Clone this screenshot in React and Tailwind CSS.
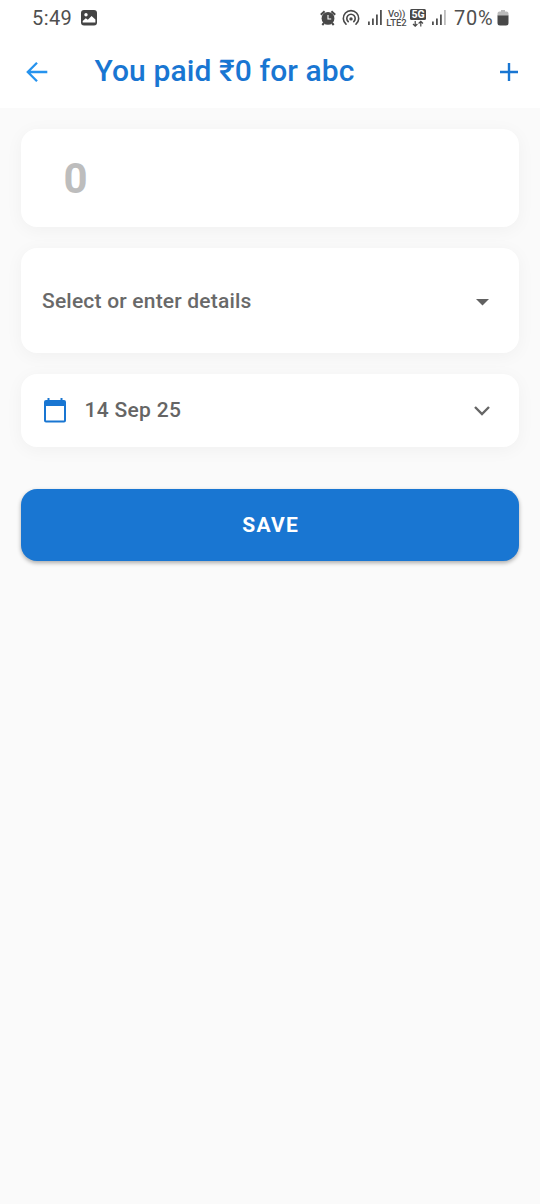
import React from "react";

function AlarmIcon() {
  return (
    <svg className="ml-[239px] h-4 w-4 shrink-0" viewBox="0 0 16 16" fill="none">
      <circle cx="8" cy="8.4" r="6.4" fill="#484848" />
      <path d="M.8 4.800 4.600 1.200M15.200 4.800 11.400 1.200M4 13l-1.700 2M12 13l1.700 2" stroke="#484848" strokeWidth="2" />
      <path d="M8 5v4h3.200" stroke="#fff" strokeWidth="1.1" />
    </svg>
  );
}

function HotspotIcon() {
  return (
    <svg className="ml-[6px] h-[18px] w-[18px] shrink-0" viewBox="0 0 18 18" fill="none" stroke="#484848" strokeWidth="1.6" strokeLinecap="round">
      <path d="M4 15.200A7.700 7.700 0 1 1 14 15.200" />
      <path d="M6.200 12.600A4.200 4.200 0 1 1 11.800 12.600" />
      <circle cx="9" cy="9.900" r="0.9" fill="#484848" />
    </svg>
  );
}

function SignalIcon({ className, last }) {
  return (
    <svg className={className} viewBox="0 0 14 15">
      <path fill="#505050" d="M0 11.5h1.8V15H0zM4 8.5h1.8V15H4zM8 4.5h1.8V15H8z" />
      <path fill={last} d="M12 0h1.8v15H12z" />
    </svg>
  );
}

function StatusBar() {
  return (
    <div className="flex h-[35px] items-center text-[#4f4f4f]">
      <span className="ml-8 w-[41px] shrink-0 text-[20px] leading-none tracking-[0.4px] whitespace-nowrap">5:49</span>
      <svg className="ml-2 h-4 w-4 shrink-0" viewBox="0 0 16 16">
        <rect width="16" height="15.5" rx="3" fill="#444" />
        <circle cx="5" cy="4.8" r="1.7" fill="#fff" />
        <path d="M1.7 12.6V11l3.1-2.8 2 1.6L10.6 6l3.8 3.5v3.1z" fill="#fff" />
      </svg>
      <div className="-ml-[16px] flex items-center">
        <AlarmIcon />
        <HotspotIcon />
        <SignalIcon className="ml-2 h-[15px] w-[14px] shrink-0" last="#505050" />
        <div className="ml-[4px] flex w-[21px] shrink-0 flex-col items-center text-[9.5px] leading-[9px] font-medium whitespace-nowrap">
          <span className="tracking-[-0.2px]">Vo))</span>
          <span>LTE2</span>
        </div>
        <svg className="ml-[3px] h-[18px] w-4 shrink-0" viewBox="0 0 16 18">
          <rect width="16" height="11" rx="1.5" fill="#484848" />
          <text x="8" y="9.2" textAnchor="middle" fontSize="10.5" fontWeight="700" fill="#fff">5G</text>
          <path d="M5.2 12v5M3 15l2.200 2.200L7.400 15M10.800 17.500v-5M8.600 14.500l2.200-2.200 2.200 2.200" stroke="#484848" strokeWidth="1.2" fill="none" />
        </svg>
        <SignalIcon className="ml-[6px] h-[15px] w-[14px] shrink-0" last="#bcbcbc" />
        <span className="ml-[8px] w-[41px] shrink-0 text-[20px] leading-none tracking-[0.8px] whitespace-nowrap">70%</span>
        <svg className="ml-[2px] h-4 w-3 shrink-0" viewBox="0 0 12 16">
          <path d="M4 0h4v1.5h1.5A2 2 0 0 1 11.5 3.500V6H.5V3.500A2 2 0 0 1 2.500 1.500H4z" fill="#bbb" />
          <path d="M.5 5.500h11V13a2.500 2.500 0 0 1-2.500 2.500H3A2.500 2.500 0 0 1 .5 13z" fill="#484848" />
        </svg>
      </div>
    </div>
  );
}

function Header() {
  return (
    <header className="flex h-[73px] items-center text-[#1976d2]">
      <svg className="ml-[26px] h-[22px] w-[22px] shrink-0" viewBox="0 0 22 22" fill="none" stroke="#2693ee" strokeWidth="2.3">
        <path d="M21.300 11H2.500M11 1.800 1.800 11l9.200 9.200" />
      </svg>
      <h1 className="ml-[46.500px] w-[404px] pb-[1px] text-[30px] leading-[36px] font-medium tracking-[0.1px] whitespace-nowrap">You paid ₹0 for abc</h1>
      <svg className="h-[20px] w-[20px] shrink-0" viewBox="0 0 20 20" stroke="#1976d2" strokeWidth="2.4">
        <path d="M1 10h18M10 1v18" />
      </svg>
    </header>
  );
}

export default function App() {
  return (
    <div className="min-h-[1204px] w-[540px] overflow-hidden bg-[#fafafa] font-['Roboto',sans-serif]">
      <div className="bg-white">
        <StatusBar />
        <Header />
      </div>
      <main className="flex flex-col px-[21px] pt-[21px]">
        <section className="flex h-[98px] items-center rounded-[16px] bg-white pt-[2px] pl-[42.500px] shadow-[0_3px_18px_rgba(0,0,0,0.045)]">
          <span className="text-[42px] leading-none font-bold text-[#bdbdbd]">0</span>
        </section>
        <section className="mt-[21px] flex h-[105px] items-center justify-between rounded-[16px] bg-white pt-[2px] pr-[30px] pl-[21px] shadow-[0_3px_18px_rgba(0,0,0,0.045)]">
          <span className="text-[21px] font-medium tracking-[0.2px] text-[#696969]">Select or enter details</span>
          <svg className="mt-[2px] h-[7px] w-[13px]" viewBox="0 0 13 7"><path d="M0 0h13L6.500 6.500z" fill="#616161" /></svg>
        </section>
        <section className="mt-[21px] flex h-[73px] items-center rounded-[16px] bg-white pr-[29px] pl-[23px] shadow-[0_3px_18px_rgba(0,0,0,0.045)]">
          <svg className="h-[25px] w-[22px]" viewBox="0 0 22 25">
            <path fill="#1976d2" fillRule="evenodd" d="M3.500 0h2v2h11V0h2v2H20a2 2 0 0 1 2 2v18.500a2 2 0 0 1-2 2H2a2 2 0 0 1-2-2V4a2 2 0 0 1 2-2h1.500zM2 8v14.500h18V8z" />
          </svg>
          <span className="ml-[18.500px] flex-1 text-[21px] font-medium tracking-[0.3px] text-[#656565]">14 Sep 25</span>
          <svg className="h-[10px] w-[16px]" viewBox="0 0 16 10" fill="none" stroke="#666" strokeWidth="2.4"><path d="m1 1 7 7 7-7" /></svg>
        </section>
        <button className="mt-[42px] flex h-[72px] items-center justify-center rounded-[16px] bg-[#1976d2] pt-[2px] pl-[1.500px] text-[21px] font-bold tracking-[1.3px] text-white shadow-[0_2px_4px_rgba(0,0,0,0.32)]">SAVE</button>
      </main>
    </div>
  );
}
